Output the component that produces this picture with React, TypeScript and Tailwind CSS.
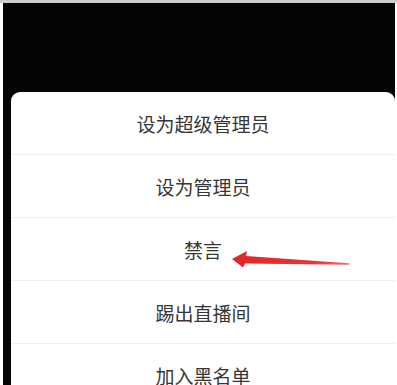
import React from "react";

const items = ["设为超级管理员", "设为管理员", "禁言", "踢出直播间", "加入黑名单"];

export default function App() {
  return (
    <div className="relative w-[397px] h-[385px] overflow-hidden bg-white">
      <div className="h-[3px] bg-[#cdcdcd]" />
      <div className="ml-[3px] w-[392px] h-[382px] bg-[#050505] pt-[89px] pl-[8px]">
        <div
          className="bg-white rounded-t-[9px] text-[#363636] text-[19px]"
          style={{ fontFamily: '"Noto Sans CJK SC", "Noto Sans", sans-serif' }}
        >
          {items.map((t) => (
            <div
              key={t}
              className="h-[63px] border-b border-[#f0f0f0] flex items-center justify-center leading-none"
            >
              {t}
            </div>
          ))}
        </div>
      </div>
      <svg
        className="absolute left-0 top-0"
        width="397"
        height="385"
        viewBox="0 0 397 385"
      >
        <defs>
          <linearGradient id="ar" x1="0" y1="0" x2="1" y2="0">
            <stop offset="0" stopColor="#e32626" />
            <stop offset="0.7" stopColor="#ea3434" />
            <stop offset="1" stopColor="#f26a6a" />
          </linearGradient>
        </defs>
        <polygon
          points="232,259 247,251 246,256 349,263.2 349,264.7 245,263.6 243,267.5"
          fill="url(#ar)"
        />
      </svg>
    </div>
  );
}
